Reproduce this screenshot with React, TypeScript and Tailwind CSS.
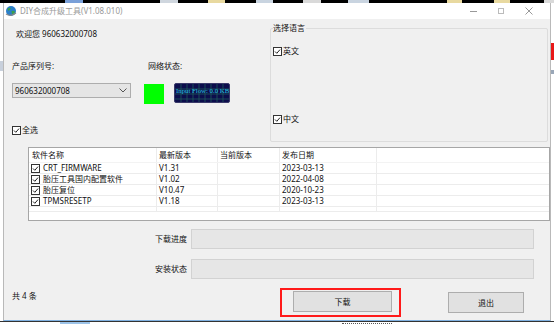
import React from "react";

const font = { fontFamily: '"Noto Sans", "Noto Sans CJK SC", sans-serif' };

function Check() {
  return (
    <svg width="9" height="9" viewBox="0 0 9 9" className="shrink-0">
      <rect x="0.5" y="0.5" width="8" height="8" fill="#fff" stroke="#333" />
      <path d="M2 4.5 L3.8 6.3 L7 2.6" fill="none" stroke="#222" strokeWidth="1" />
    </svg>
  );
}

function Globe() {
  return (
    <svg width="12" height="12" viewBox="0 0 12 12">
      <circle cx="6" cy="6" r="5" fill="#2c7fc9" />
      <path d="M2.5 4 Q4 2 6 3 Q5 5 3.5 6 Z M6.5 6 Q9 5 10 7 Q8.5 9.5 7 9 Z" fill="#3aa24a" />
      <path d="M1 9 Q6 12 11 8" stroke="#888" strokeWidth="1.2" fill="none" />
    </svg>
  );
}

function NetPanel() {
  const cols = [6, 12, 18, 24, 30, 36, 42, 48];
  const rows = [5, 10, 15];
  return (
    <div className="relative w-[56px] h-[20px] rounded-[2px] overflow-hidden bg-[#0c0d4c] border border-[#3a3a6a]">
      <svg width="56" height="20" className="absolute inset-0">
        {cols.map((x) => (
          <line key={x} x1={x} y1="0" x2={x} y2="20" stroke="#1f5a5a" strokeWidth="0.8" />
        ))}
        {rows.map((y) => (
          <line key={y} x1="0" y1={y} x2="56" y2={y} stroke="#1f5a5a" strokeWidth="0.8" />
        ))}
      </svg>
      <span
        className="absolute left-[1px] top-[2px] text-[6.8px] leading-[9px] text-[#27c4e0] whitespace-nowrap"
        style={{ fontFamily: '"Liberation Serif", serif' }}
      >
        Input Flow: 0.0 KB
      </span>
    </div>
  );
}

const rows = [
  { name: "CRT_FIRMWARE", ver: "V1.31", date: "2023-03-13" },
  { name: "胎压工具国内配置软件", ver: "V1.02", date: "2022-04-08" },
  { name: "胎压复位", ver: "V10.47", date: "2020-10-23" },
  { name: "TPMSRESETP", ver: "V1.18", date: "2023-03-13" },
];

const cell = "border-r border-[#ececec] px-[2px] flex items-center";

export default function App() {
  return (
    <div
      className="w-[554px] h-[325px] bg-white flex flex-col overflow-hidden text-[8px] leading-[12px] text-[#111]"
      style={font}
    >
      {/* desktop strip behind the window */}
      <div className="h-[3px] bg-black flex shrink-0">
        <div className="ml-[65px] w-[18px] bg-[#7aa0d8]" />
        <div className="ml-[77px] w-[18px] bg-[#cfd6de]" />
        <div className="ml-[30px] w-[17px] bg-[#e8d9a0]" />
        <div className="ml-[31px] w-[17px] bg-[#c9d4e0]" />
        <div className="ml-[30px] w-[18px] bg-[#d9d9d9]" />
        <div className="ml-[27px] w-[21px] bg-[#c9d4e0]" />
        <div className="ml-[78px] w-[15px] bg-[#e8d9a0]" />
        <div className="ml-[32px] w-[16px] bg-[#e8d9a0]" />
        <div className="ml-[34px] w-[10px] bg-[#d9d9d9]" />
      </div>

      <div className="flex shrink-0">
        <div className="w-[3px] flex flex-col">
          <div className="h-[58px]" />
          <div className="h-[10px] bg-[#c8d0dc]" />
        </div>

        {/* window */}
        <div className="w-[548px] h-[318px] flex flex-col border-l border-r border-[#b9b9b9] border-b border-b-[#7fb0e0]">
          {/* title bar */}
          <div className="h-[16px] bg-white flex items-center shrink-0">
            <div className="ml-[1px]">
              <Globe />
            </div>
            <span className="ml-[3px] text-[#9a9a9a]">DIY合成升级工具(V1.08.010)</span>
            <div className="flex-1" />
            <div className="w-[28px] flex justify-center">
              <div className="w-[7px] h-px bg-[#999]" />
            </div>
            <div className="w-[28px] flex justify-center">
              <div className="w-[6px] h-[6px] border border-[#bbb]" />
            </div>
            <div className="w-[28px] flex justify-center">
              <svg width="8" height="8" viewBox="0 0 8 8">
                <path d="M0.5 0.5 L7.5 7.5 M7.5 0.5 L0.5 7.5" stroke="#999" strokeWidth="1" />
              </svg>
            </div>
            <div className="w-[7px]" />
          </div>

          {/* body */}
          <div className="flex-1 bg-[#f0f0f0] flex flex-col">
            <div className="flex h-[123px] shrink-0">
              <div className="w-[266px] pl-[8px] flex flex-col">
                <div className="mt-[9px] pl-[4px]">欢迎您 960632000708</div>
                <div className="mt-[20px] flex">
                  <span className="w-[136px]">产品序列号:</span>
                  <span>网络状态:</span>
                </div>
                <div className="mt-[11px] flex items-start">
                  <div className="w-[119px] h-[15px] bg-[#e5e5e5] border border-[#adadad] flex items-center pl-[2px]">
                    <span className="flex-1">960632000708</span>
                    <svg width="8" height="5" viewBox="0 0 8 5" className="mr-[3px]">
                      <path d="M0.5 0.5 L4 4 L7.5 0.5" fill="none" stroke="#555" />
                    </svg>
                  </div>
                  <div className="ml-[13px] mt-[1px] w-[20px] h-[20px] bg-[#00ff00]" />
                  <div className="ml-[10px]">
                    <NetPanel />
                  </div>
                </div>
                <div className="mt-[20px] flex items-center gap-[1px]">
                  <Check />
                  <span>全选</span>
                </div>
              </div>

              {/* language group */}
              <div className="relative mt-[9px] w-[278px] h-[114px] border border-[#dcdcdc] rounded-[2px] flex flex-col pl-[2px]">
                <span className="absolute left-[2px] top-[-7px] bg-[#f0f0f0] pr-[1px]">选择语言</span>
                <div className="mt-[16px] flex items-center gap-[1px]">
                  <Check />
                  <span>英文</span>
                </div>
                <div className="mt-[56px] flex items-center gap-[1px]">
                  <Check />
                  <span>中文</span>
                </div>
              </div>
            </div>

            {/* software table */}
            <div className="mt-[5px] ml-[24px] w-[522px] h-[74px] bg-white border border-[#a6a6a6] flex flex-col shrink-0">
              <div className="h-[15px] grid grid-cols-[128px_61px_62px_97px_1fr] border-b border-[#f3f3f3]">
                <div className={cell + " pl-[3px]"}>软件名称</div>
                <div className={cell}>最新版本</div>
                <div className={cell}>当前版本</div>
                <div className={cell}>发布日期</div>
                <div />
              </div>
              {rows.map((r) => (
                <div
                  key={r.name}
                  className="h-[11px] grid grid-cols-[128px_61px_62px_97px_1fr] border-b border-[#ececec] leading-[10px]"
                >
                  <div className={cell + " gap-[3px] pl-[2px]"}>
                    <Check />
                    <span>{r.name}</span>
                  </div>
                  <div className={cell}>{r.ver}</div>
                  <div className={cell} />
                  <div className={cell}>{r.date}</div>
                  <div />
                </div>
              ))}
              <div className="h-[5px] grid grid-cols-[128px_61px_62px_97px_1fr] border-b border-[#ececec]">
                <div className={cell} />
                <div className={cell} />
                <div className={cell} />
                <div className={cell} />
                <div />
              </div>
            </div>

            {/* progress rows */}
            <div className="mt-[8px] flex items-center shrink-0">
              <span className="w-[183px] text-right">下载进度</span>
              <div className="ml-[4px] w-[343px] h-[20px] bg-[#e6e6e6] border border-[#d2d2d2]" />
            </div>
            <div className="mt-[10px] flex items-center shrink-0">
              <span className="w-[183px] text-right">安装状态</span>
              <div className="ml-[4px] w-[343px] h-[20px] bg-[#e6e6e6] border border-[#d2d2d2]" />
            </div>

            {/* footer */}
            <div className="mt-[9px] flex items-start shrink-0">
              <span className="w-[276px] pl-[8px] mt-[2px]">共 4 条</span>
              <div className="w-[121px] h-[29px] border-2 border-[#ff1a1a] pl-[11px] pt-px">
                <button className="w-[99px] h-[21px] bg-[#e1e1e1] border border-[#adadad] flex items-center justify-center">
                  下载
                </button>
              </div>
              <button className="ml-[47px] mt-[4px] w-[76px] h-[21px] bg-[#e1e1e1] border border-[#adadad] flex items-center justify-center">
                退出
              </button>
            </div>
          </div>
        </div>

        <div className="flex-1 flex flex-col">
          <div className="h-[40px]" />
          <div className="h-[17px] bg-[#e81818]" />
          <div className="h-[10px]" />
          <div className="h-[4px] bg-[#9aa7b8]" />
        </div>
      </div>

      <div className="h-px bg-[#333] shrink-0" />
      <div className="flex-1 bg-white flex">
        <div className="ml-[60px] w-[30px] h-[2px] bg-[#9cc3e8]" />
        <div className="ml-[252px] w-[50px] h-px mt-[1px] border-t border-dotted border-[#555]" />
      </div>
    </div>
  );
}
